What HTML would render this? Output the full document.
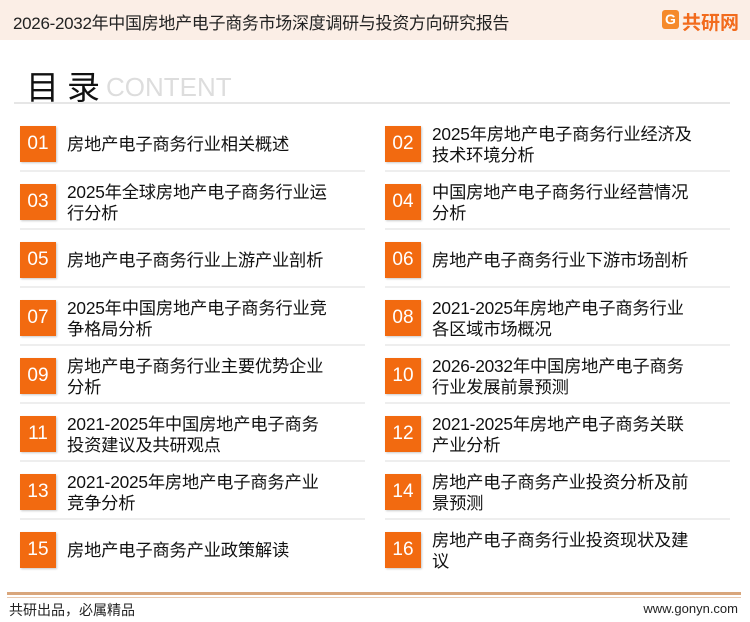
<!DOCTYPE html>
<html><head><meta charset="utf-8"><style>
*{margin:0;padding:0;box-sizing:border-box}
body{width:750px;height:622px;background:#fff;position:relative;overflow:hidden;font-family:"Liberation Sans","Noto Sans CJK SC",sans-serif;color:#111}
.hdr{position:absolute;left:0;top:0;width:750px;height:40px;background:#fbeee6}
.ttl{position:absolute;left:13px;top:9px;font-size:17px;color:#222;letter-spacing:-0.3px}
.logo{position:absolute;left:662px;top:8px;font-size:19px;font-weight:bold;color:#f26b1d}
.lg{display:inline-block;width:17px;height:19px;background:#f58a2a;border-radius:3px;color:#fff;font-size:14px;text-align:center;line-height:19px;vertical-align:top;margin-right:3px;margin-top:2px}
.mu{position:absolute;left:26px;top:61px;font-size:33px;color:#111;letter-spacing:8px}
.ct{position:absolute;left:106px;top:72px;font-size:26px;color:#ddd;font-weight:300}
.rule{position:absolute;left:14px;top:102px;width:716px;height:2px;background:#e6e6e6}
.it{position:absolute;height:58px}
.box{position:absolute;left:0;width:36px;height:36px;background:#f26a10;color:#fff;font-size:19px;text-align:center;line-height:36px;box-shadow:1px 1px 2px #c9c9c9}
.tx{position:absolute;left:47px;font-size:17.3px;line-height:21px;color:#111;white-space:nowrap;letter-spacing:-0.2px}
.sep{position:absolute;height:2px;background:#eeeeee}
.f1{position:absolute;left:7px;top:592px;width:734px;height:3px;background:#d9a67c}
.f2{position:absolute;left:7px;top:597px;width:734px;height:1px;background:#e8c9b0}
.ft{position:absolute;left:9px;top:600px;font-size:14px;color:#222}
.fr{position:absolute;right:12px;top:601px;font-size:13px;color:#222}
</style></head><body>
<div class="hdr"></div>
<div class="ttl">2026-2032年中国房地产电子商务市场深度调研与投资方向研究报告</div>
<div class="logo"><span class="lg">G</span>共研网</div>
<div class="mu">目录</div>
<div class="ct">CONTENT</div>
<div class="rule"></div>

<div class="it" style="left:20px;top:126px"><div class="box">01</div><div class="tx" style="top:8px">房地产电子商务行业相关概述</div></div>
<div class="it" style="left:385px;top:126px"><div class="box">02</div><div class="tx" style="top:-2px">2025年房地产电子商务行业经济及<br>技术环境分析</div></div>

<div class="it" style="left:20px;top:184px"><div class="box">03</div><div class="tx" style="top:-2px">2025年全球房地产电子商务行业运<br>行分析</div></div>
<div class="it" style="left:385px;top:184px"><div class="box">04</div><div class="tx" style="top:-2px">中国房地产电子商务行业经营情况<br>分析</div></div>

<div class="it" style="left:20px;top:242px"><div class="box">05</div><div class="tx" style="top:8px">房地产电子商务行业上游产业剖析</div></div>
<div class="it" style="left:385px;top:242px"><div class="box">06</div><div class="tx" style="top:8px">房地产电子商务行业下游市场剖析</div></div>

<div class="it" style="left:20px;top:300px"><div class="box">07</div><div class="tx" style="top:-2px">2025年中国房地产电子商务行业竞<br>争格局分析</div></div>
<div class="it" style="left:385px;top:300px"><div class="box">08</div><div class="tx" style="top:-2px">2021-2025年房地产电子商务行业<br>各区域市场概况</div></div>

<div class="it" style="left:20px;top:358px"><div class="box">09</div><div class="tx" style="top:-2px">房地产电子商务行业主要优势企业<br>分析</div></div>
<div class="it" style="left:385px;top:358px"><div class="box">10</div><div class="tx" style="top:-2px">2026-2032年中国房地产电子商务<br>行业发展前景预测</div></div>

<div class="it" style="left:20px;top:416px"><div class="box">11</div><div class="tx" style="top:-2px">2021-2025年中国房地产电子商务<br>投资建议及共研观点</div></div>
<div class="it" style="left:385px;top:416px"><div class="box">12</div><div class="tx" style="top:-2px">2021-2025年房地产电子商务关联<br>产业分析</div></div>

<div class="it" style="left:20px;top:474px"><div class="box">13</div><div class="tx" style="top:-2px">2021-2025年房地产电子商务产业<br>竞争分析</div></div>
<div class="it" style="left:385px;top:474px"><div class="box">14</div><div class="tx" style="top:-2px">房地产电子商务产业投资分析及前<br>景预测</div></div>

<div class="it" style="left:20px;top:532px"><div class="box">15</div><div class="tx" style="top:8px">房地产电子商务产业政策解读</div></div>
<div class="it" style="left:385px;top:532px"><div class="box">16</div><div class="tx" style="top:-2px">房地产电子商务行业投资现状及建<br>议</div></div>

<div class="sep" style="left:20px;top:170px;width:345px"></div><div class="sep" style="left:385px;top:170px;width:345px"></div>
<div class="sep" style="left:20px;top:228px;width:345px"></div><div class="sep" style="left:385px;top:228px;width:345px"></div>
<div class="sep" style="left:20px;top:286px;width:345px"></div><div class="sep" style="left:385px;top:286px;width:345px"></div>
<div class="sep" style="left:20px;top:344px;width:345px"></div><div class="sep" style="left:385px;top:344px;width:345px"></div>
<div class="sep" style="left:20px;top:402px;width:345px"></div><div class="sep" style="left:385px;top:402px;width:345px"></div>
<div class="sep" style="left:20px;top:460px;width:345px"></div><div class="sep" style="left:385px;top:460px;width:345px"></div>
<div class="sep" style="left:20px;top:518px;width:345px"></div><div class="sep" style="left:385px;top:518px;width:345px"></div>

<div class="f1"></div><div class="f2"></div>
<div class="ft">共研出品，必属精品</div>
<div class="fr">www.gonyn.com</div>
</body></html>
